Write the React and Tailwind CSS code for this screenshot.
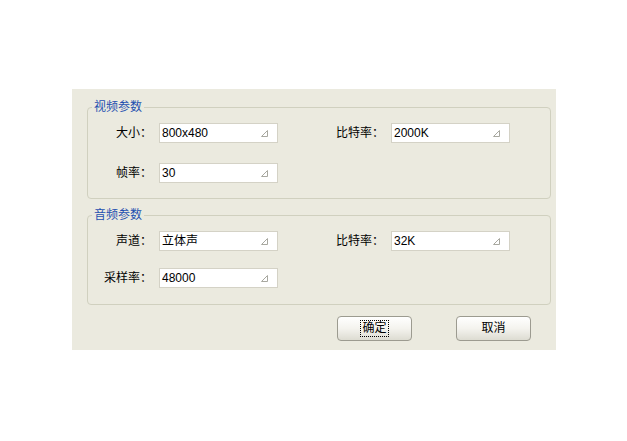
import React from 'react'

const Grip = () => (
  <svg width="8" height="7" viewBox="0 0 8 7" className="shrink-0">
    <path d="M6.5 0.5 L6.5 6.5 L0.5 6.5 Z" fill="none" stroke="#a8a8a0" strokeWidth="1" />
  </svg>
)

const Field = ({ value }) => (
  <div className="w-[119px] h-[20px] bg-white border border-[#d4d2c6] flex items-center pl-[2px] pr-[8px]">
    <span className="flex-1 text-[12px] leading-none text-black">{value}</span>
    <Grip />
  </div>
)

const Row = ({ left, right }) => (
  <div className="flex items-center">
    <div className="w-[64px] text-right text-[12px] text-black">{left.label}</div>
    <div className="ml-[7px]"><Field value={left.value} /></div>
    {right && (
      <>
        <div className="ml-[54px] w-[52px] text-right text-[12px] text-black">{right.label}</div>
        <div className="ml-[7px]"><Field value={right.value} /></div>
      </>
    )}
  </div>
)

const Group = ({ title, children, className }) => (
  <fieldset className={`w-[464px] border border-[#d0d0bf] rounded-[4px] px-0 ${className}`}>
    <legend className="ml-[4px] px-[2px] h-[16px] leading-[16px] text-[12px] text-[#1f50b0]">{title}</legend>
    {children}
  </fieldset>
)

const Btn = ({ children, focused }) => (
  <button className="w-[75px] h-[25px] rounded-[4px] border border-[#9c9b90] bg-gradient-to-b from-white via-[#f4f3ee] to-[#dddcd2] flex items-center justify-center text-[12px] text-black">
    <span className={focused ? 'border border-dotted border-black px-[1px] leading-[15px]' : 'leading-[15px]'}>{children}</span>
  </button>
)

export default function App() {
  return (
    <div className="w-[627px] h-[441px] bg-white pt-[89px] pl-[72px]" style={{ fontFamily: '"Liberation Sans", "Noto Sans CJK SC", sans-serif' }}>
      <div className="w-[484px] h-[261px] bg-[#ebeadf] pt-[10px] pl-[15px]">
        {/* 视频参数 */}
        <Group title="视频参数" className="pt-[8px] pb-[15px]">
          <div className="flex flex-col gap-[20px]">
            <Row left={{ label: '大小：', value: '800x480' }} right={{ label: '比特率：', value: '2000K' }} />
            <Row left={{ label: '帧率：', value: '30' }} />
          </div>
        </Group>

        {/* 音频参数 */}
        <Group title="音频参数" className="mt-[8px] pt-[8px] pb-[16px]">
          <div className="flex flex-col gap-[17px]">
            <Row left={{ label: '声道：', value: '立体声' }} right={{ label: '比特率：', value: '32K' }} />
            <Row left={{ label: '采样率：', value: '48000' }} />
          </div>
        </Group>

        <div className="mt-[11px] flex justify-end gap-[44px] pr-[25px]">
          <Btn focused>确定</Btn>
          <Btn>取消</Btn>
        </div>
      </div>
    </div>
  )
}
